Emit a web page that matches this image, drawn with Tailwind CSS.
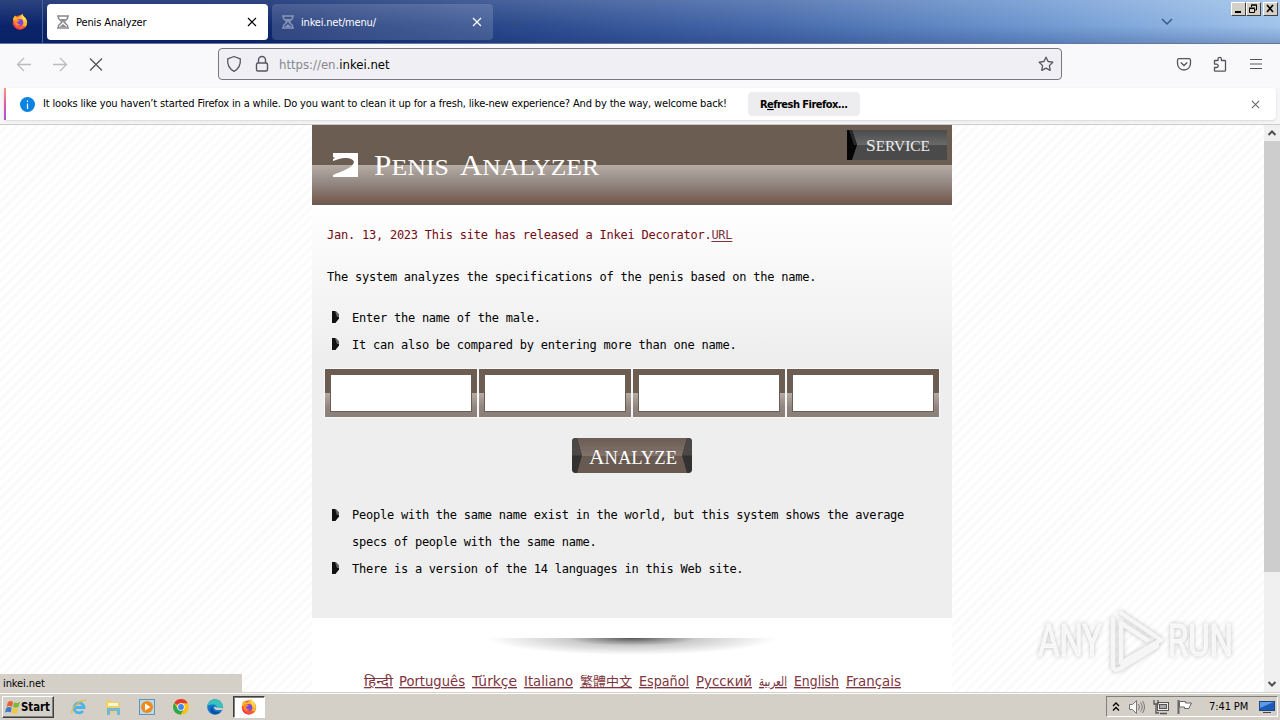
<!DOCTYPE html>
<html lang="en">
  <head>
    <meta charset="UTF-8" />
    <meta name="viewport" content="width=device-width, initial-scale=1.0" />
    <title>Penis Analyzer</title>
    <script src="https://cdn.jsdelivr.net/npm/@tailwindcss/browser@4"></script>
    <style>
      body {
        font-family: "DejaVu Sans Condensed", "DejaVu Sans", "Noto Sans CJK TC", sans-serif;
      }
      .titlebar {
        background:
          linear-gradient(180deg, rgba(255, 255, 255, 0.14), rgba(255, 255, 255, 0) 60%, rgba(0, 20, 90, 0.22)),
          linear-gradient(90deg, #0a246a 0%, #0d276d 20%, #2b4a8c 40%, #4669aa 60%, #6d96cf 80%, #a0c4ec 100%);
      }
      .stripes {
        background: repeating-linear-gradient(135deg, #fff 0 4px, #fafafa 4px 7px);
      }
      .banner {
        background: linear-gradient(180deg, #6b5d51 0 50%, #b5aca4 50%, #90847e 75%, #755c50 96%, #665c58 100%);
      }
      .field {
        background: linear-gradient(180deg, #6b5d51 0 50%, #b5aca4 50%, #90847e 80%, #8a7e78 100%);
      }
      .win-btn {
        background: #d4d0c8;
        border: 1px solid;
        border-color: #fff #404040 #404040 #fff;
      }
    </style>
  </head>
  <body class="w-[1280px] h-[720px] overflow-hidden flex flex-col bg-white text-black">
    <svg class="hidden">
      <symbol id="hourglass" viewBox="0 0 14 14">
        <path d="M1 1h12M1 13h12M2.500 1.500v2L6 7l-3.500 3.500v2M11.500 1.500v2L8 7l3.500 3.500v2" fill="none" stroke="currentColor" stroke-width="1.500" />
        <path d="M4 4h6L7 7zM3.500 12l3.500-3 3.500 3z" fill="currentColor" />
      </symbol>
      <symbol id="cross" viewBox="0 0 10 10">
        <path d="M1 1l8 8M9 1L1 9" fill="none" stroke="currentColor" stroke-width="1.200" />
      </symbol>
      <symbol id="firefox" viewBox="0 0 16 16">
        <circle cx="8" cy="8.500" r="7.200" fill="#ff5a2c" />
        <path d="M1 6C1 3 3 2 3.500 1.500 4 3 5 3.500 6 3.500L9 1c1-.8 1.300-.8 1.500-1 .3 2 1.500 2.500 3 4.200C15.500 6.500 15.500 10 14 12.500L8 11z" fill="#ffb52e" />
        <path d="M1.300 10.500C2.500 15 7 16 10 15c-3 0-6-1-7.500-4z" fill="#f5246b" />
        <circle cx="7.800" cy="8.500" r="3.600" fill="#8145df" />
        <path d="M3.500 5.500c2-.8 3 .2 4.500 1-1.600.2-1.500 1.200-3 1.700.3 1.500 2 2.400 3.600 2C6.500 13 2.500 11.500 2.500 8z" fill="#ff8b2b" />
        <path d="M10.500 0c-1.200 1.500-1.400 3-.3 4.200C11.500 5.500 12 7 11.700 9c1-1 1-2.500.6-3.500 1 1 1.500 2.500 1.300 4 1.200-2 .8-4-.4-5.500C12 2.700 10.700 2 10.500 0z" fill="#ffe04f" />
      </symbol>
      <symbol id="bullet" viewBox="0 0 7 12">
        <path d="M0 0h3.500L7 3.500v4L3.500 12H0z" fill="#111" />
        <path d="M3 0h.8L7 3.500V6H5z" fill="#666" />
      </symbol>
    </svg>

    <!-- Tab strip -->
    <header class="titlebar relative h-[44px] shrink-0 flex items-start border-b border-[#66779b]">
      <div class="w-[43px] h-[43px] flex items-center justify-center border-r border-[#4d6194] pr-0.5">
        <svg class="w-4 h-4"><use href="#firefox" /></svg>
      </div>
      <div class="ml-1 mt-1 w-[221px] h-9 rounded bg-white flex items-center pl-[9px] pr-[11px] text-[11px]">
        <svg class="w-[14px] h-[14px] text-[#8a8a90]"><use href="#hourglass" /></svg>
        <span class="ml-1.5 pt-[3px] flex-1 tracking-[-0.12px]">Penis Analyzer</span>
        <svg class="w-[10px] h-[10px]"><use href="#cross" /></svg>
      </div>
      <div class="ml-1 mt-1 w-[221px] h-9 rounded bg-white/15 flex items-center pl-[9px] pr-[11px] text-[11px] text-white">
        <svg class="w-[14px] h-[14px] text-[#8795b8]"><use href="#hourglass" /></svg>
        <span class="ml-1.5 pt-[3px] flex-1 tracking-[-0.18px]">inkei.net/menu/</span>
        <svg class="w-[10px] h-[10px]"><use href="#cross" /></svg>
      </div>
      <svg class="ml-[17px] mt-[18px] w-[10px] h-[10px]"><path d="M5 0v10M0 5h10" stroke="#3b4d7b" /></svg>
      <svg class="ml-auto mr-[107px] mt-[18px] w-3 h-2"><path d="M1 1l5 5 5-5" fill="none" stroke="#3c5885" stroke-width="1.500" /></svg>
      <div class="absolute right-[2px] top-[2px] flex">
        <div class="win-btn w-[15px] h-[14px]"><svg class="w-[13px] h-3"><path d="M3 9h6" stroke="#000" stroke-width="2" /></svg></div>
        <div class="win-btn w-[15px] h-[14px]">
          <svg class="w-[13px] h-3"><path d="M4.500 4V2h5v5h-2M4 2h6M2.500 5.500h5v4h-5zM2 5h6" fill="none" stroke="#000" /></svg>
        </div>
        <div class="win-btn ml-0.5 w-[15px] h-[14px]"><svg class="w-[13px] h-3"><path d="M3 2l6 7M9 2L3 9" stroke="#000" stroke-width="1.600" /></svg></div>
      </div>
    </header>

    <!-- Toolbar -->
    <nav class="h-[44px] shrink-0 bg-[#f9f9fb] flex items-start pt-1">
      <svg class="ml-4 mt-2 w-4 h-4"><path d="M15 8.500H1.500M8 2L1.500 8.500 8 15" fill="none" stroke="#bcbcc0" stroke-width="1.300" /></svg>
      <svg class="ml-[21px] mt-2 w-4 h-4"><path d="M0 8.500h13.500M7 2l6.500 6.500L7 15" fill="none" stroke="#bcbcc0" stroke-width="1.300" /></svg>
      <svg class="ml-5 mt-2 w-[14px] h-4"><path d="M1 2.500l12 12M13 2.500l-12 12" stroke="#55555f" stroke-width="1.400" /></svg>
      <div class="ml-[115px] w-[844px] h-8 rounded border border-[#77777f] bg-[#f0f0f4] flex items-center px-[7px]">
        <svg class="w-4 h-[18px]"><path d="M8 1.500l6.300 2.300c.5 5.500-1.300 10-6.300 12.500C3 13.800 1.200 9.300 1.700 3.800z" fill="none" stroke="#55555f" stroke-width="1.300" stroke-linejoin="round" /></svg>
        <svg class="ml-3 w-4 h-[18px]" fill="none" stroke="#55555f" stroke-width="1.400"><rect x="2.500" y="8" width="11" height="8" rx="1.500" /><path d="M4.500 8V5a3.500 3.500 0 0 1 7 0v3" /></svg>
        <span class="ml-[9px] pt-0.5 flex-1 text-[13px] text-[#85858c]">https://en.<span class="text-black">inkei.net</span></span>
        <svg class="w-4 h-4"><path d="M8 1.200l2.100 4.300 4.700.7-3.400 3.400.8 4.800L8 12.200l-4.200 2.200.8-4.800L1.200 6.200l4.700-.7z" fill="none" stroke="#55555f" stroke-width="1.300" stroke-linejoin="round" /></svg>
      </div>
      <svg class="ml-[114px] mt-2 w-4 h-4" fill="none" stroke="#55555f" stroke-width="1.300"><path d="M3 2.700h10q1.500 0 1.500 1.500V7.500a6.500 6.500 0 0 1-13 0V4.200Q1.500 2.700 3 2.700z" /><path d="M4.800 6.500L8 9.500l3.200-3" /></svg>
      <svg class="ml-5 mt-2 w-4 h-4"><path d="M2.500 4.500h3.500V3a1.700 1.700 0 0 1 3.400 0v1.500h3.300q.8 0 .8.800v9.200q0 .7-.8.700H3.300q-.8 0-.8-.7V11.500h2a1.700 1.700 0 0 0 0-3.400h-2z" fill="none" stroke="#55555f" stroke-width="1.300" stroke-linejoin="round" /></svg>
      <svg class="ml-5 mt-2 w-4 h-4"><path d="M2 3.500h12M2 8h12M2 12.500h12" stroke="#55555f" stroke-width="1.200" /></svg>
    </nav>

    <!-- Notification bar -->
    <div class="h-[37px] shrink-0 bg-[#f6f6f8] border-b border-[#cfcac6]">
      <div class="ml-1 mr-1 h-8 bg-white rounded flex items-center shadow-sm">
        <div class="w-0.5 h-8 bg-linear-to-b from-[#f29a72] via-[#e455ac] to-[#9859cf]"></div>
        <svg class="ml-[14px] w-[15px] h-[15px]"><circle cx="7.500" cy="7.500" r="7.500" fill="#0a84e0" /><path d="M7.500 3.500v1.500M7.500 6.500V12" stroke="#fff" stroke-width="1.200" /></svg>
        <svg class="ml-2 w-[686px] h-4 overflow-visible"><text x="0" y="11" font-size="11" textLength="684">It looks like you haven’t started Firefox in a while. Do you want to clean it up for a fresh, like-new experience? And by the way, welcome back!</text></svg>
        <button class="ml-[19px] w-[112px] h-6 rounded bg-[#ededf0] flex items-center justify-center">
          <svg class="w-[88px] h-4 overflow-visible"><text x="0" y="12" font-size="11" font-weight="bold" textLength="88">R<tspan text-decoration="underline">e</tspan>fresh Firefox...</text></svg>
        </button>
        <svg class="ml-auto mr-4 w-[9px] h-[9px] text-[#66666e]"><use href="#cross" /></svg>
      </div>
    </div>

    <!-- Page -->
    <div class="relative h-[567px] shrink-0 flex overflow-hidden">
      <div class="stripes flex-1 pl-[312px]">
        <main class="w-[640px] h-full bg-white">
          <div class="h-[493px] bg-linear-to-b from-white from-[80px] to-[#eee] to-[230px]">
            <div class="banner h-20 flex items-start">
              <svg class="ml-[21px] mt-7 w-[25px] h-6"><path d="M0 0h25v24H0v-2C9 18 20 15 21 9 20 5 12 4 6 6L0 8V6l2-1-2-1z" fill="#fff" /></svg>
              <svg class="ml-4 mt-[21px] w-[226px] h-9 overflow-visible" font-family="Liberation Serif, serif" fill="#fff">
                <text x="0" y="29" font-size="29" textLength="75" lengthAdjust="spacingAndGlyphs">P<tspan font-size="24">ENIS</tspan></text>
                <text x="86" y="29" font-size="29" textLength="139" lengthAdjust="spacingAndGlyphs">A<tspan font-size="24">NALYZER</tspan></text>
              </svg>
              <a class="ml-auto mr-[5px] mt-[5px] w-[100px] h-[30px] bg-linear-to-b from-[#4b4b4b] from-0% via-[#696a6b] via-50% to-[#4a4a4a] to-50%">
                <svg class="w-[100px] h-[30px]" font-family="Liberation Serif, serif">
                  <path d="M0 0h5l5 15-5 15H0z" fill="#050505" />
                  <path d="M2 0h3l5 15H7z" fill="#29292b" />
                  <text x="19" y="21" font-size="17" fill="#eee" textLength="64" lengthAdjust="spacingAndGlyphs">S<tspan font-size="15">ERVICE</tspan></text>
                </svg>
              </a>
            </div>
            <div class="px-[15px] pt-[17px] font-['DejaVu_Sans_Mono',monospace] text-[12px] leading-[27px] tracking-[-0.236px]">
              <p class="text-[#730b13]">Jan. 13, 2023 This site has released a Inkei Decorator.<a class="underline underline-offset-2 text-[#80343d]">URL</a></p>
              <p class="mt-[15px]">The system analyzes the specifications of the penis based on the name.</p>
              <ul class="mt-[14px]">
                <li class="flex items-start"><svg class="ml-[5px] mr-[13px] mt-1.5 w-[7px] h-3"><use href="#bullet" /></svg>Enter the name of the male.</li>
                <li class="flex items-start"><svg class="ml-[5px] mr-[13px] mt-1.5 w-[7px] h-3"><use href="#bullet" /></svg>It can also be compared by entering more than one name.</li>
              </ul>
            </div>
            <form class="mt-[10px] ml-[13px] flex gap-0.5">
              <div class="field w-[152px] h-12 p-[5px] outline outline-[#f7f7f7]"><div class="h-full bg-white border border-[#6b5d51]"></div></div>
              <div class="field w-[152px] h-12 p-[5px] outline outline-[#f7f7f7]"><div class="h-full bg-white border border-[#6b5d51]"></div></div>
              <div class="field w-[152px] h-12 p-[5px] outline outline-[#f7f7f7]"><div class="h-full bg-white border border-[#6b5d51]"></div></div>
              <div class="field w-[152px] h-12 p-[5px] outline outline-[#f7f7f7]"><div class="h-full bg-white border border-[#6b5d51]"></div></div>
            </form>
            <button class="block mx-auto mt-[21px] w-[120px] h-[35px] rounded-[4px] overflow-hidden bg-linear-to-b from-[#6b5d54] from-0% via-[#81736b] via-50% to-[#685a50] to-50%">
              <svg class="w-[120px] h-[35px]" font-family="Liberation Serif, serif">
                <path d="M0 0h5l5 17.500L5 35H0zM120 0h-5l-5 17.500 5 17.500h5z" fill="#343230" />
                <path d="M0 0h5l5 17.500H0zM120 0h-5l-5 17.500h10z" fill="#4b4846" />
                <text x="17" y="25.500" font-size="22" fill="#fff" textLength="88" lengthAdjust="spacingAndGlyphs">A<tspan font-size="19">NALYZE</tspan></text>
              </svg>
            </button>
            <ul class="mt-[29px] px-[15px] font-['DejaVu_Sans_Mono',monospace] text-[12px] leading-[27px] tracking-[-0.236px]">
              <li class="flex items-start"><svg class="ml-[5px] mr-[13px] mt-[7px] w-[7px] h-3 shrink-0"><use href="#bullet" /></svg><span>People with the same name exist in the world, but this system shows the average<br />specs of people with the same name.</span></li>
              <li class="flex items-start"><svg class="ml-[5px] mr-[13px] mt-1.5 w-[7px] h-3"><use href="#bullet" /></svg>There is a version of the 14 languages in this Web site.</li>
            </ul>
          </div>
          <div class="mt-5 mx-auto w-[290px] h-[17px] bg-radial-[ellipse_50%_100%_at_50%_0%] from-[#555] via-[#ccc] via-45% to-white"></div>
          <!-- Language links, each label fitted to its own width -->
          <svg class="mt-[17px] ml-[52px] w-[538px] h-6 overflow-visible" font-size="13.500" fill="#80343d" text-decoration="underline">
            <text x="0" y="14" textLength="29" lengthAdjust="spacingAndGlyphs" font-size="13" font-family="Noto Sans, sans-serif">हिन्दी</text>
            <text x="35" y="14" textLength="66" lengthAdjust="spacingAndGlyphs">Português</text>
            <text x="108" y="14" textLength="45" lengthAdjust="spacingAndGlyphs">Türkçe</text>
            <text x="160" y="14" textLength="49" lengthAdjust="spacingAndGlyphs">Italiano</text>
            <text x="216" y="14" textLength="52" lengthAdjust="spacingAndGlyphs" font-size="13" font-family="Noto Sans CJK TC, sans-serif">繁體中文</text>
            <text x="275" y="14" textLength="50" lengthAdjust="spacingAndGlyphs">Español</text>
            <text x="332" y="14" textLength="56" lengthAdjust="spacingAndGlyphs">Русский</text>
            <text x="395" y="14" textLength="28" lengthAdjust="spacingAndGlyphs">العربية</text>
            <text x="430" y="14" textLength="45" lengthAdjust="spacingAndGlyphs">English</text>
            <text x="482" y="14" textLength="55" lengthAdjust="spacingAndGlyphs">Français</text>
          </svg>
        </main>
      </div>
      <div class="w-4 bg-[#f0f0f0] flex flex-col items-center">
        <svg class="w-4 h-4"><path d="M4.500 10L8 6.500l3.500 3.500" fill="none" stroke="#505050" stroke-width="2" /></svg>
        <div class="w-4 h-[431px] bg-[#cdcdcd]"></div>
        <svg class="mt-auto w-4 h-4"><path d="M4.500 6L8 9.500 11.500 6" fill="none" stroke="#505050" stroke-width="2" /></svg>
      </div>
      <div class="absolute left-0 bottom-0 w-[242px] h-[18px] bg-[#d4d0c8] pl-[3px] text-[11px] leading-[20px] tracking-[-0.1px]">inkei.net</div>
      <!-- Watermark -->
      <svg class="absolute left-[1034px] top-[480px] w-[220px] h-[70px] overflow-visible drop-shadow-[0_0_2px_rgba(0,0,0,0.25)]" font-family="Roboto, sans-serif">
        <g fill="#fafafa" fill-opacity=".9" stroke="#fafafa" font-size="44">
          <text x="4" y="51" textLength="64" lengthAdjust="spacingAndGlyphs">ANY</text>
          <text x="134" y="51" textLength="65" lengthAdjust="spacingAndGlyphs">RUN</text>
        </g>
        <g fill="none" stroke="#f6f6f6" stroke-width="4.500" stroke-linejoin="round" stroke-linecap="round">
          <path d="M87 8l40 27-40 23V18l26 17" />
          <path d="M79 14v48q2 5 8 1l36-22" />
        </g>
      </svg>
    </div>

    <!-- Taskbar -->
    <footer class="flex-1 bg-[#d4d0c8] border-t border-[#d4d0c8] shadow-[inset_0_1px_0_#fff] flex items-center">
      <button class="ml-0.5 w-[52px] h-[22px] bg-[#d4d0c8] border border-t-white border-l-white border-r-[#404040] border-b-[#404040] shadow-[inset_-1px_-1px_0_#808080] flex items-center pl-0.5">
        <svg class="w-4 h-4 shrink-0">
          <path d="M3 3q3-2 5 0L7 8Q4 6 1.500 8z" fill="#e8612c" /><path d="M9 3.500q3 1 6-.5L13.500 8q-3 1.500-5.500 0z" fill="#7db83b" />
          <path d="M1.200 9q3-2 5.500 0l-1 4.500Q3 12 0 13.500z" fill="#3b7bc9" /><path d="M7.800 9.200q3 1.500 5.500 0L12 14q-3 1.300-5.500-.3z" fill="#f7c630" />
        </svg>
        <svg class="w-[29px] h-4 overflow-visible"><text x="0" y="12" font-size="12" font-weight="bold" textLength="29" lengthAdjust="spacingAndGlyphs">Start</text></svg>
      </button>
      <svg class="ml-[17px] w-4 h-4 overflow-visible"><path d="M3.500 8.500h9.500a5 5 0 1 0-1 3.500" fill="none" stroke="#4cb4ea" stroke-width="2.800" /><path d="M1 14.500C-1 11 9 0 15 1.500" fill="none" stroke="#e9b93a" stroke-width="1.200" /></svg>
      <svg class="ml-[18px] w-4 h-4"><path d="M1 1h5l1 2h8v11H1z" fill="#edcf70" /><path d="M3 4h10v3H3z" fill="#fff6cc" /><path d="M2 16V9h13v7h-3v-4H5v4z" fill="#70b9dc" /></svg>
      <svg class="ml-[18px] w-4 h-4"><rect x=".5" y=".5" width="15" height="15" fill="#b9dbef" stroke="#5d94bb" /><circle cx="8" cy="8" r="6" fill="#f18a17" /><path d="M6 4.500l5.500 3.500L6 11.500z" fill="#fff" /></svg>
      <svg class="ml-[18px] w-4 h-4"><circle cx="8" cy="8" r="7.800" fill="#fbc116" /><path d="M8 8L1.200 4A7.800 7.800 0 0 1 14.800 4.200H8z" fill="#e33b2e" /><path d="M1.200 4A7.800 7.800 0 0 0 7.500 15.800L11 10 8 8 5 10z" fill="#2da94f" /><circle cx="8" cy="8" r="3.700" fill="#fff" /><circle cx="8" cy="8" r="2.900" fill="#4285f4" /></svg>
      <svg class="ml-[18px] w-4 h-4"><circle cx="8" cy="8" r="7.800" fill="#1478cf" /><path d="M.3 7C1.500-1 14-2 15.700 7c.3 3-3 4.500-6 3.500C11 8 9 5.500 6 5.500 3.500 5.500 1.500 6 .3 7z" fill="#37c2ba" /><path d="M6 7c-1.500 3 1 7 7.500 5.500C11 16 6 16 4 13 2.500 10.500 4 8 6 7z" fill="#0c4f9e" /><path d="M7.500 7.500c-1 1.500.5 3.500 3 3.500h5V9h-3.500c-2 0-2.500-1-4.500-1.500z" fill="#d4d0c8" /></svg>
      <div class="ml-[10px] w-8 h-[22px] bg-white border border-t-[#404040] border-l-[#404040] border-r-white border-b-white shadow-[inset_1px_1px_0_#808080] flex items-center justify-center">
        <svg class="w-4 h-4"><use href="#firefox" /></svg>
      </div>
      <div class="ml-auto mr-[2px] w-[172px] h-[21px] border border-t-[#808080] border-l-[#808080] border-r-white border-b-white flex items-center text-[11px]">
        <svg class="ml-[5px] w-2 h-[10px]"><path d="M1 4l3-3 3 3M1 8.500l3-3 3 3" fill="none" stroke="#000" stroke-width="1.300" /></svg>
        <svg class="ml-[9px] w-4 h-4" fill="#f8f8f8" stroke="#777"><path d="M.5 5.500h3l4-4v13l-4-4h-3z" /><path d="M9.500 5q2 3 0 6M11.500 3.500q3.500 4.500 0 9M13.500 2q4 6 0 12" fill="none" /></svg>
        <svg class="ml-2 w-4 h-4" fill="#eee" stroke="#555"><rect x="4.500" y="3.500" width="11" height="8" /><rect x="6.500" y="5.500" width="7" height="4" fill="#aaa" /><path d="M1 1v4h4V1M3 5v9h3M7 14.500h7" fill="none" stroke-width="1.300" /></svg>
        <svg class="ml-2 w-4 h-4" fill="#fff" stroke="#666"><path d="M1.500 1v14" stroke-width="2" /><path d="M2.500 2.500h6v1.500h6L13 7l-1 2.500H7.500V8h-5z" /></svg>
        <span class="ml-4 pt-0.5 whitespace-nowrap tracking-[-0.1px]">7:41 PM</span>
        <svg class="ml-auto mr-0.5 w-4 h-[14px]"><rect x=".5" y="1.500" width="15" height="9" fill="#1d5bb7" stroke="#204580" /><path d="M1 2h14L1 8z" fill="#5b9de5" /><path d="M4 12.500h8" stroke="#444" /></svg>
      </div>
    </footer>
  </body>
</html>
